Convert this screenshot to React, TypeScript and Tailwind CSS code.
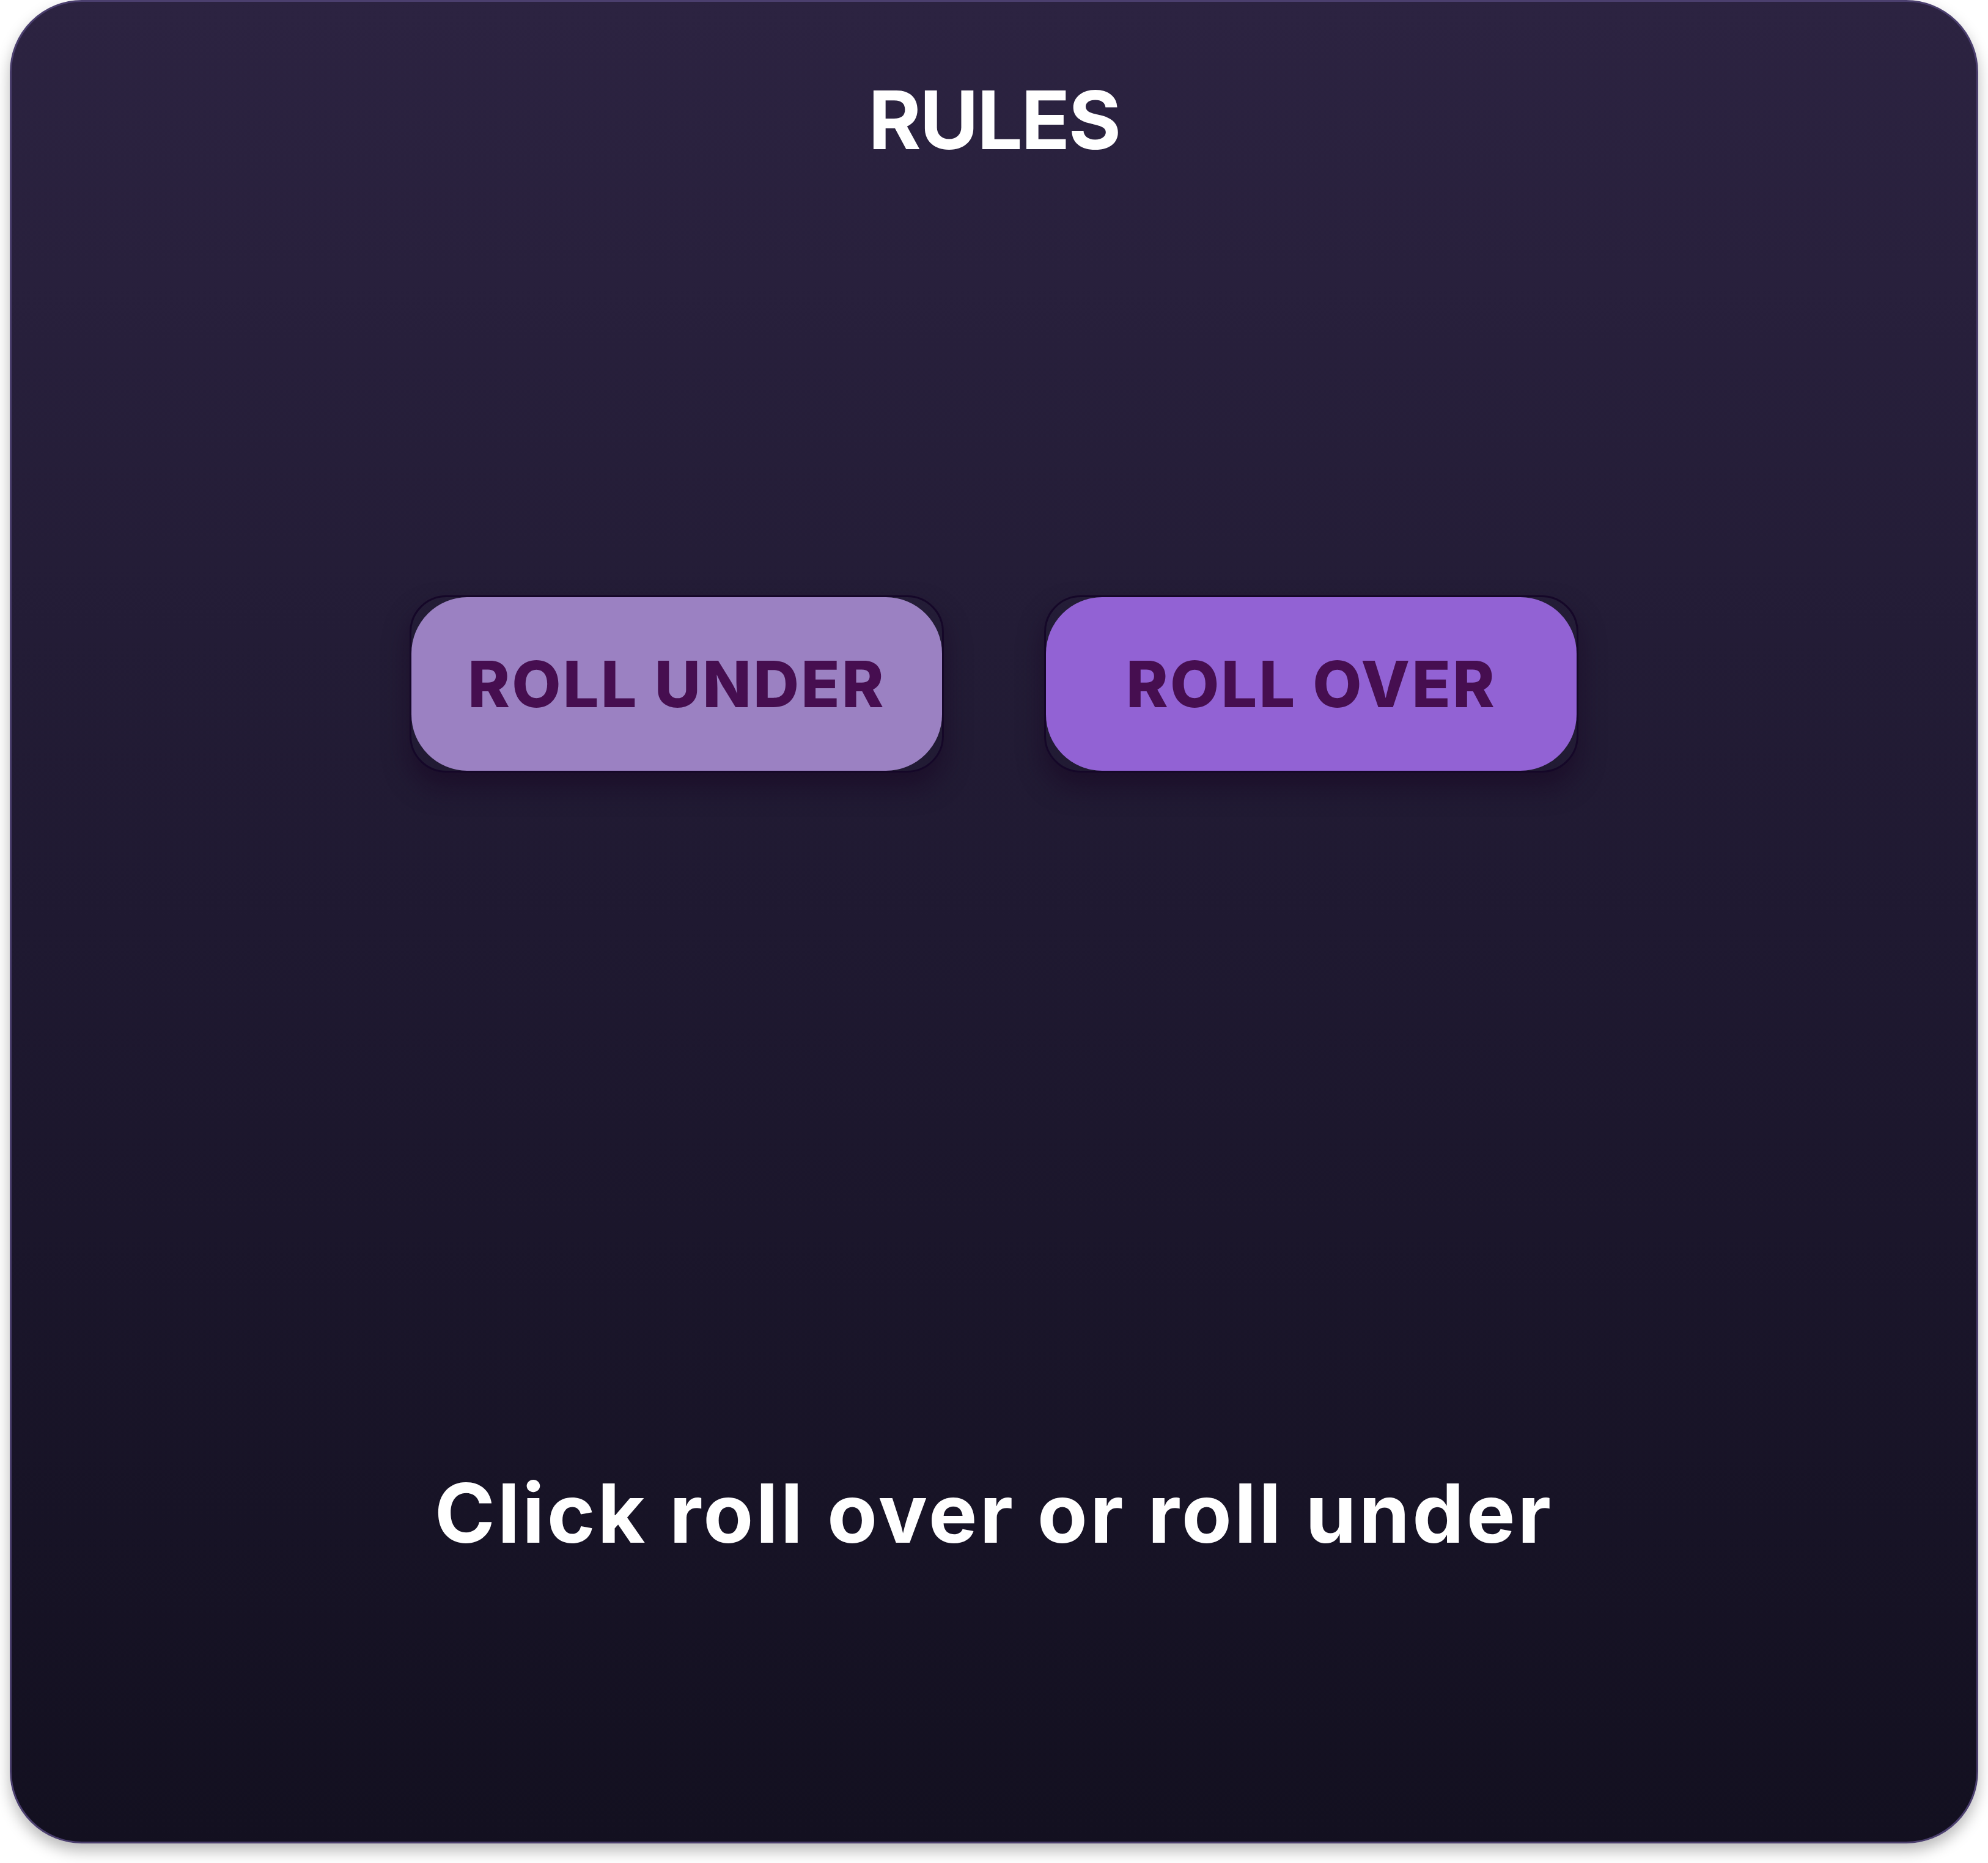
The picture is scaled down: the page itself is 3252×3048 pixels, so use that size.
import React from 'react';

const RollButton: React.FC<{ label: string; fill: string }> = ({ label, fill }) => (
  <button className="w-[874px] h-[290px] rounded-[60px] border-[3px] border-[#150728] shadow-[0_24px_40px_rgba(24,6,34,0.55)]">
    <span
      className={`flex w-full h-full items-center justify-center rounded-[92px] ${fill} text-[#460e50] text-[104px] font-extrabold leading-none tracking-[0.03em]`}
      style={{ fontFamily: 'Inter, "Noto Sans", sans-serif' }}
    >
      {label}
    </span>
  </button>
);

export default function App() {
  return (
    <div className="w-[3252px] min-h-[3048px] bg-white px-4" style={{ fontFamily: 'Inter, "Noto Sans", sans-serif' }}>
      <div className="flex flex-col items-center h-[3016px] rounded-[118px] border-[3px] border-[#4b3f6e] bg-gradient-to-b from-[#2c2341] via-[#1f1931] to-[#131020] shadow-[0_12px_24px_rgba(0,0,0,0.28)]">
        <h1 className="mt-[127px] text-[132px] font-bold leading-none text-white tracking-[-0.02em]">RULES</h1>

        <div className="mt-[712px] flex gap-[164px]">
          <RollButton label="ROLL UNDER" fill="bg-[#9b81c2]" />
          <RollButton label="ROLL OVER" fill="bg-[#9262d4]" />
        </div>

        <p className="mt-[1144px] text-[134px] font-bold leading-none text-white tracking-[0.03em]">
          Click roll over or roll under
        </p>
      </div>
    </div>
  );
}
